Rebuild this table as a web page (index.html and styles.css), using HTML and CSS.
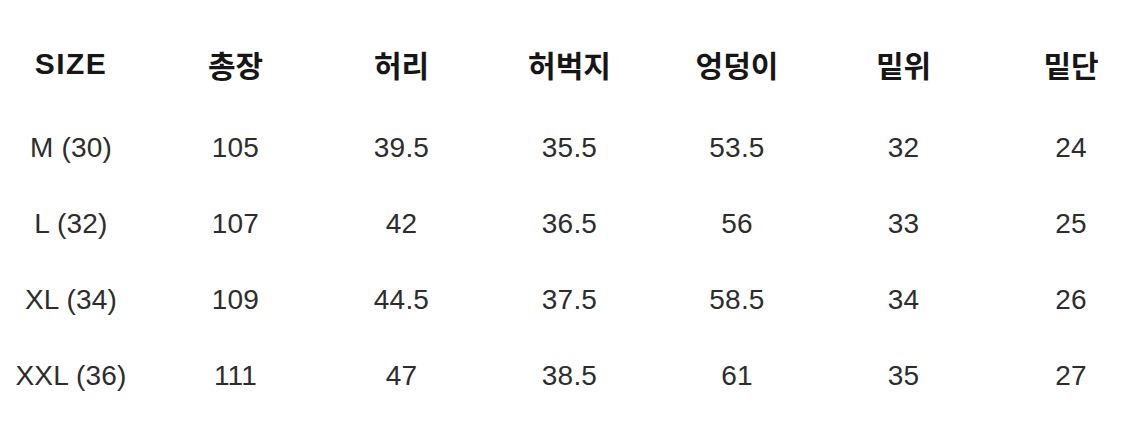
FILE: index.html
```html
<!DOCTYPE html>
<html lang="ko">
<head>
<meta charset="utf-8">
<link rel="stylesheet" href="styles.css">
</head>
<body>
<div class="table">
  <div class="cell head latin">SIZE</div>
  <div class="cell head">총장</div>
  <div class="cell head">허리</div>
  <div class="cell head">허벅지</div>
  <div class="cell head">엉덩이</div>
  <div class="cell head">밑위</div>
  <div class="cell head">밑단</div>

  <div class="cell">M (30)</div>
  <div class="cell">105</div>
  <div class="cell">39.5</div>
  <div class="cell">35.5</div>
  <div class="cell">53.5</div>
  <div class="cell">32</div>
  <div class="cell">24</div>

  <div class="cell">L (32)</div>
  <div class="cell">107</div>
  <div class="cell">42</div>
  <div class="cell">36.5</div>
  <div class="cell">56</div>
  <div class="cell">33</div>
  <div class="cell">25</div>

  <div class="cell">XL (34)</div>
  <div class="cell">109</div>
  <div class="cell">44.5</div>
  <div class="cell">37.5</div>
  <div class="cell">58.5</div>
  <div class="cell">34</div>
  <div class="cell">26</div>

  <div class="cell">XXL (36)</div>
  <div class="cell">111</div>
  <div class="cell">47</div>
  <div class="cell">38.5</div>
  <div class="cell">61</div>
  <div class="cell">35</div>
  <div class="cell">27</div>
</div>
</body>
</html>
```
FILE: styles.css
```css
html, body {
  margin: 0;
  padding: 0;
  background: #ffffff;
  overflow: hidden;
}
body {
  width: 1125px;
  height: 433px;
  font-family: "Liberation Sans", "Noto Sans CJK KR", sans-serif;
}
.table {
  display: grid;
  grid-template-columns: 153px 165px 167px 169px 166px 167px 168px;
  grid-template-rows: 92px repeat(4, 76px);
  padding-top: 18px;
  width: 1155px;
}
.cell {
  display: flex;
  align-items: center;
  justify-content: center;
  font-size: 28px;
  color: #2d2d2d;
  white-space: nowrap;
  letter-spacing: 0.2px;
}
.cell:nth-child(7n+1) {
  padding-right: 11px;
}
.head {
  font-size: 30px;
  font-weight: 700;
  color: #161616;
  letter-spacing: 0;
}
.latin {
  letter-spacing: 1.5px;
}
```
